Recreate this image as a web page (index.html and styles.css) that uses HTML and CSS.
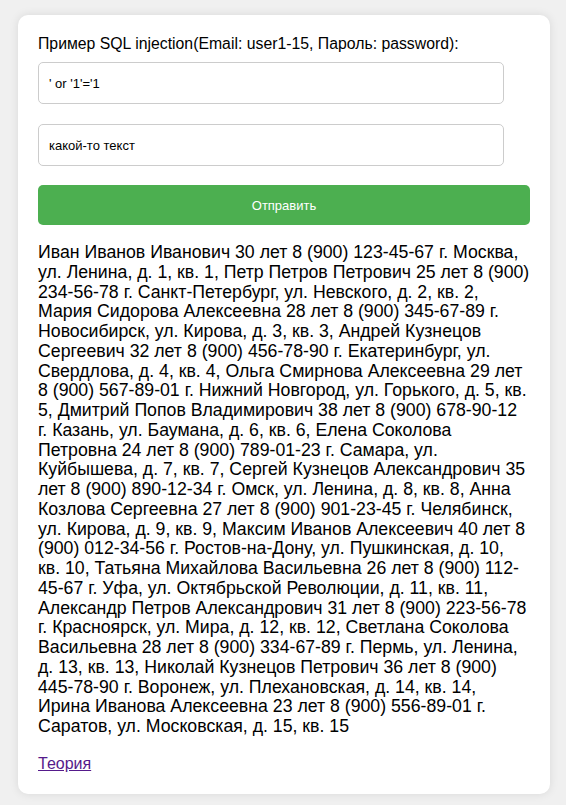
FILE: index.html
```html
<!DOCTYPE html>
<html lang="ru">
<head>
<meta charset="utf-8">
<title>SQL injection</title>
<link rel="stylesheet" href="styles.css">
</head>
<body>
<div class="card">
  <form class="form">
    <label class="label">Пример SQL injection(Email: user1-15, Пароль: password):</label>
    <input class="field" type="text" value="' or '1'='1">
    <input class="field" type="text" value="какой-то текст">
    <button class="submit" type="button">Отправить</button>
  </form>
  <div class="result">Иван Иванов Иванович 30 лет 8 (900) 123-45-67 г. Москва, ул. Ленина, д. 1, кв. 1, Петр Петров Петрович 25 лет 8 (900) 234-56-78 г. Санкт-Петербург, ул. Невского, д. 2, кв. 2, Мария Сидорова Алексеевна 28 лет 8 (900) 345-67-89 г. Новосибирск, ул. Кирова, д. 3, кв. 3, Андрей Кузнецов Сергеевич 32 лет 8 (900) 456-78-90 г. Екатеринбург, ул. Свердлова, д. 4, кв. 4, Ольга Смирнова Алексеевна 29 лет 8 (900) 567-89-01 г. Нижний Новгород, ул. Горького, д. 5, кв. 5, Дмитрий Попов Владимирович 38 лет 8 (900) 678-90-12 г. Казань, ул. Баумана, д. 6, кв. 6, Елена Соколова Петровна 24 лет 8 (900) 789-01-23 г. Самара, ул. Куйбышева, д. 7, кв. 7, Сергей Кузнецов Александрович 35 лет 8 (900) 890-12-34 г. Омск, ул. Ленина, д. 8, кв. 8, Анна Козлова Сергеевна 27 лет 8 (900) 901-23-45 г. Челябинск, ул. Кирова, д. 9, кв. 9, Максим Иванов Алексеевич 40 лет 8 (900) 012-34-56 г. Ростов-на-Дону, ул. Пушкинская, д. 10, кв. 10, Татьяна Михайлова Васильевна 26 лет 8 (900) 112-45-67 г. Уфа, ул. Октябрьской Революции, д. 11, кв. 11, Александр Петров Александрович 31 лет 8 (900) 223-56-78 г. Красноярск, ул. Мира, д. 12, кв. 12, Светлана Соколова Васильевна 28 лет 8 (900) 334-67-89 г. Пермь, ул. Ленина, д. 13, кв. 13, Николай Кузнецов Петрович 36 лет 8 (900) 445-78-90 г. Воронеж, ул. Плехановская, д. 14, кв. 14, Ирина Иванова Алексеевна 23 лет 8 (900) 556-89-01 г. Саратов, ул. Московская, д. 15, кв. 15</div>
  <a class="link" href="#">Теория</a>
</div>
</body>
</html>
```

FILE: styles.css
```css
html, body {
  margin: 0;
  padding: 0;
}
body {
  background: #f0f0f0;
  font-family: "Liberation Sans", Arial, sans-serif;
  padding: 15px 16px 12px 18px;
}
.card {
  background: #ffffff;
  border-radius: 10px;
  box-shadow: 0 0 10px rgba(0, 0, 0, 0.1);
  padding: 20px 20px 21px 20px;
}
.form {
  display: flex;
  flex-direction: column;
  align-items: flex-start;
}
.label {
  display: block;
  font-size: 15.8px;
  color: #000;
  margin-bottom: 9px;
}
.field {
  box-sizing: border-box;
  width: 466px;
  height: 42px;
  padding: 0 10px;
  border: 1px solid #cccccc;
  border-radius: 5px;
  font-family: "Liberation Sans", Arial, sans-serif;
  font-size: 13px;
  color: #000;
  margin-bottom: 20px;
  background: #fff;
}
.submit {
  width: 100%;
  height: 40px;
  margin-top: -1px;
  border: none;
  border-radius: 5px;
  background: #4caf50;
  color: #fff;
  font-family: "Liberation Sans", Arial, sans-serif;
  font-size: 13px;
}
.result {
  margin-top: 18px;
  font-size: 17.72px;
  line-height: 19.75px;
  color: #000;
}
.link {
  display: inline-block;
  margin-top: 18px;
  font-size: 16px;
  color: #551a8b;
}
```
